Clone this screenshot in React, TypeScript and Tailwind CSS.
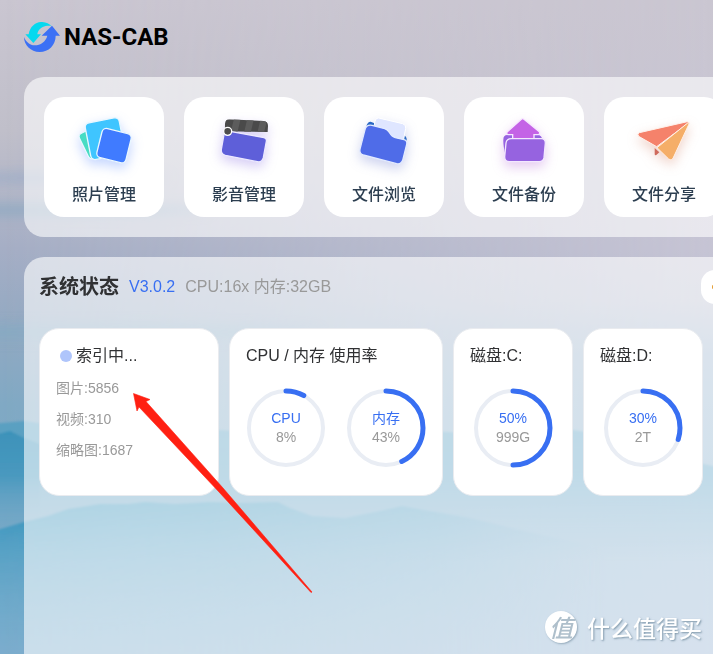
import type { ReactNode } from 'react';

const PhotoIcon = () => (
  <svg viewBox="0 0 240 180" className="h-[60px] w-20 drop-shadow-[0_5px_6px_rgba(64,120,255,0.3)]" aria-hidden="true">
    <g stroke="#e9f7ff" strokeWidth="4">
      <rect x="57" y="61" width="58" height="84" rx="12" fill="#47dcc4" transform="rotate(-26 86 103)" />
      <rect x="71" y="33" width="104" height="112" rx="14" fill="#3fc5ff" transform="rotate(-11 123 89)" />
      <rect x="105" y="65" width="90" height="90" rx="14" fill="#407bff" transform="rotate(14 150 110)" />
    </g>
  </svg>
);

const MovieIcon = () => (
  <svg viewBox="0 0 240 180" className="h-[60px] w-20 drop-shadow-[0_5px_6px_rgba(110,80,220,0.28)]" aria-hidden="true">
    <clipPath id="clapper">
      <path d="M76 31 L178 36 Q192 37 192 50 L191 69 L62 67 L63 44 Q64 31 76 31Z" />
    </clipPath>
    <g clipPath="url(#clapper)">
      <rect x="50" y="20" width="160" height="60" fill="#4a4a4a" />
      <path d="M92 20 L112 20 L98 80 L78 80Z M132 20 L152 20 L138 80 L118 80Z M172 20 L192 20 L178 80 L158 80Z" fill="#5c5c5c" />
    </g>
    <path d="M78 67 L180 86 Q189 88 187 97 L178 146 Q174 161 160 158 L64 139 Q50 135 52 121 L60 76 Q63 65 78 67Z" fill="#5e5fd9" stroke="#ece9ff" strokeWidth="4" />
    <circle cx="71" cy="67" r="12" fill="#4c4c4c" stroke="#fff" strokeWidth="4" />
  </svg>
);

const FolderIcon = () => (
  <svg viewBox="0 0 240 180" className="h-[60px] w-20 drop-shadow-[0_5px_6px_rgba(60,80,190,0.25)]" aria-hidden="true">
    <path d="M67 52 Q70 38 80 38 L176 76 Q190 82 188 96 L170 110Z" fill="#2b69c4" />
    <path d="M104 27 L176 44 Q187 48 185 58 L177 102 L86 76 L93 36 Q96 26 104 27Z" fill="#dfe6ff" stroke="#fff" strokeWidth="3" />
    <path d="M84 49 L122 59 Q130 61 136 70 Q144 83 154 86 L180 92 Q191 95 188 106 L176 154 Q171 167 158 164 L58 138 Q45 134 48 120 L63 62 Q67 46 84 49Z" fill="#4f6ce8" stroke="#e3ebff" strokeWidth="4" />
  </svg>
);

const BackupIcon = () => (
  <svg viewBox="0 0 240 180" className="h-[60px] w-20 drop-shadow-[0_5px_6px_rgba(160,70,200,0.28)]" aria-hidden="true">
    <path d="M70 78 L160 78 Q174 78 174 92 L160 130 L66 145 Q57 110 58 92 Q58 78 70 78Z" fill="#9663e0" />
    <path d="M112 31 Q116 27 120 31 L166 68 Q170 76 162 77 L150 77 L150 96 L86 96 L86 77 L73 77 Q65 76 70 68Z" fill="#c463e6" stroke="#f7e8ff" strokeWidth="4" />
    <path d="M82 89 L172 89 Q184 89 184 102 L180 146 Q178 158 166 158 L76 158 Q62 158 62 144 L66 102 Q68 89 82 89Z" fill="#9663e0" stroke="#f3e8ff" strokeWidth="4" />
  </svg>
);

const ShareIcon = () => (
  <svg viewBox="0 0 240 180" className="h-[60px] w-20 drop-shadow-[0_5px_6px_rgba(200,100,70,0.28)]" aria-hidden="true">
    <path d="M92 117 L106 130 L97 138 Q92 140 92 134Z" fill="#cf6a5c" />
    <path d="M46 71 L190 38 Q196 38 192 43 L98 113 L44 82 Q38 74 46 71Z" fill="#f5826b" stroke="#fff0ea" strokeWidth="3" />
    <path d="M191 42 Q197 38 195 45 L147 148 Q142 157 134 150 L99 116Z" fill="#f5ae68" stroke="#fff0e6" strokeWidth="3" />
  </svg>
);

const Logo = () => (
  <svg viewBox="0 0 108 90" className="h-[30px] w-9" aria-hidden="true">
    <path d="M4 37 L14 37 C18 12 36 -1 55 0 C67 1 76 5 82 12 C69 9 51 13 43 27 Q40 32 40 37 L51 37 L28 63Z" fill="#05d9ef" />
    <path d="M84 11 L108 41 L95 41 C95 69 74 90 47 90 C20 90 0 69 0 45 C6 60 18 70 32 70 C50 70 65 59 70 41 L53 41Z" fill="#3c70f5" />
  </svg>
);

const Landscape = () => (
  <svg viewBox="0 0 713 654" preserveAspectRatio="xMidYMid slice" className="absolute inset-0 h-full w-full" aria-hidden="true">
    <defs>
      <linearGradient id="sky" x1="0" y1="0" x2="0" y2="1">
        <stop offset="0" stopColor="#cac6d1" />
        <stop offset="0.2" stopColor="#c0bfca" />
        <stop offset="0.28" stopColor="#b5b8c8" />
        <stop offset="0.38" stopColor="#a5aec5" />
        <stop offset="0.5" stopColor="#93a9c2" />
        <stop offset="0.62" stopColor="#80a9c4" />
        <stop offset="1" stopColor="#79accb" />
      </linearGradient>
      <linearGradient id="skyRight" x1="0" y1="0" x2="0" y2="1">
        <stop offset="0" stopColor="#cac6d1" />
        <stop offset="0.38" stopColor="#c6c4d4" />
        <stop offset="0.46" stopColor="#bec2d3" />
        <stop offset="0.54" stopColor="#a4bad1" />
        <stop offset="0.75" stopColor="#8cb4d0" />
        <stop offset="1" stopColor="#9ab5d4" />
      </linearGradient>
      <linearGradient id="fade" x1="0" y1="0" x2="1" y2="0">
        <stop offset="0" stopColor="#000" />
        <stop offset="1" stopColor="#fff" />
      </linearGradient>
      <mask id="fadeRight">
        <rect width="713" height="654" fill="url(#fade)" />
      </mask>
      <linearGradient id="fadeOut" x1="0" y1="0" x2="1" y2="0">
        <stop offset="0" stopColor="#fff" />
        <stop offset="0.3" stopColor="#ccc" />
        <stop offset="0.62" stopColor="#777" />
        <stop offset="0.85" stopColor="#000" />
      </linearGradient>
      <mask id="fadeLeft">
        <rect x="-10" width="723" height="654" fill="url(#fadeOut)" />
      </mask>
      <linearGradient id="ridgeFar" x1="0" y1="0" x2="0" y2="1">
        <stop offset="0" stopColor="#4a9cc0" stopOpacity="0.7" />
        <stop offset="0.4" stopColor="#4c9dc2" stopOpacity="0.65" />
        <stop offset="0.85" stopColor="#6aa4c6" stopOpacity="0.25" />
        <stop offset="1" stopColor="#6aa4c6" stopOpacity="0" />
      </linearGradient>
      <linearGradient id="ridgeStrip" x1="0" y1="0" x2="0" y2="1">
        <stop offset="0" stopColor="#2f8cb6" />
        <stop offset="0.5" stopColor="#3590ba" stopOpacity="0.7" />
        <stop offset="1" stopColor="#6aa4c6" stopOpacity="0" />
      </linearGradient>
      <linearGradient id="ridgeNear" x1="0" y1="0" x2="0" y2="1">
        <stop offset="0" stopColor="#3593bb" />
        <stop offset="0.25" stopColor="#4a9ec4" stopOpacity="0.8" />
        <stop offset="0.75" stopColor="#70abcd" stopOpacity="0.5" />
        <stop offset="1" stopColor="#8aafd2" stopOpacity="0.5" />
      </linearGradient>
      <filter id="soft" x="-20%" y="-50%" width="140%" height="200%">
        <feGaussianBlur stdDeviation="6" />
      </filter>
      <filter id="edge">
        <feGaussianBlur stdDeviation="1" />
      </filter>
    </defs>
    <rect width="713" height="654" fill="url(#sky)" />
    <rect width="713" height="654" fill="url(#skyRight)" mask="url(#fadeRight)" />
    <g filter="url(#soft)">
      <ellipse cx="40" cy="178" rx="130" ry="5" fill="#92a9c6" opacity="0.6" />
      <ellipse cx="20" cy="210" rx="190" ry="6" fill="#86a7c1" opacity="0.7" />
      <ellipse cx="60" cy="332" rx="260" ry="8" fill="#7fabc3" opacity="0.5" />
    </g>
    <g filter="url(#edge)">
      <path d="M-10 424 L24 421 L60 426 L110 436 L150 432 L220 430 L290 436 L360 430 L450 432 L500 440 L560 428 L600 434 L650 452 L730 470 L730 560 L-10 560Z" fill="url(#ridgeFar)" />
      <path d="M-10 436 L10 431 L24 438 L40 444 L40 520 L-10 520Z" fill="url(#ridgeStrip)" opacity="0.7" />
      <path d="M-10 532 L24 522 L48 516 L68 509 L100 504 L128 504 L145 502 L175 504 L210 502 L240 503 L278 502 L290 508 L312 516 L345 518 L380 511 L402 506 L430 511 L470 518 L520 530 L600 548 L660 560 L660 670 L-10 670Z" fill="url(#ridgeNear)" mask="url(#fadeLeft)" />
    </g>
  </svg>
);

const apps = [
  { label: '照片管理', icon: <PhotoIcon /> },
  { label: '影音管理', icon: <MovieIcon /> },
  { label: '文件浏览', icon: <FolderIcon /> },
  { label: '文件备份', icon: <BackupIcon /> },
  { label: '文件分享', icon: <ShareIcon /> },
];

function Card({ title, className, children }: { title: ReactNode; className: string; children: ReactNode }) {
  return (
    <section className={`h-[168px] shrink-0 rounded-[20px] border border-[#e9ebef] bg-white px-4 pt-4 ${className}`}>
      <h3 className="flex h-[22px] items-center text-base leading-[22px] text-[#303133]">{title}</h3>
      {children}
    </section>
  );
}

function Ring({ percent, top, bottom }: { percent: number; top: string; bottom: string }) {
  return (
    <div className="grid h-20 w-20 place-items-center">
      <svg viewBox="0 0 80 80" className="col-start-1 row-start-1 h-20 w-20 -rotate-90" aria-hidden="true">
        <circle cx="40" cy="40" r="37" fill="none" stroke="#e9edf4" strokeWidth="4" />
        <circle
          cx="40"
          cy="40"
          r="37"
          fill="none"
          stroke="#386ff2"
          strokeWidth="5"
          strokeLinecap="round"
          pathLength="100"
          strokeDasharray={`${percent} 100`}
        />
      </svg>
      <div className="col-start-1 row-start-1 text-center text-sm leading-[19px]">
        <div className="text-[#386ff2]">{top}</div>
        <div className="text-[#999999]">{bottom}</div>
      </div>
    </div>
  );
}

export default function App() {
  return (
    <div className="relative flex min-h-screen flex-col overflow-hidden font-['Liberation_Sans','Noto_Sans_CJK_SC',sans-serif]">
      <Landscape />

      <header className="relative flex h-[77px] items-center gap-1 pb-[3px] pl-6">
        <Logo />
        <h1 className="font-['Roboto',sans-serif] text-2xl font-bold text-black">NAS-CAB</h1>
      </header>

      <main className="relative -mr-20 flex flex-1 flex-col gap-5 pl-6">
        <nav className="flex gap-5 rounded-[20px] bg-white/60 p-5">
          {apps.map((app) => (
            <button key={app.label} type="button" className="flex h-[120px] w-[120px] shrink-0 flex-col items-center gap-3 rounded-[20px] bg-white pt-3">
              {app.icon}
              <span className="font-['Noto_Sans_CJK_SC',sans-serif] text-base leading-6 font-medium text-[#2c3e50]">{app.label}</span>
            </button>
          ))}
        </nav>

        <section className="flex-1 rounded-t-[20px] bg-white/60 px-[15px] pt-3">
          <div className="flex h-9 items-center gap-[10px]">
            <h2 className="text-xl leading-9 font-bold text-[#303133]">系统状态</h2>
            <span className="text-base text-[#386ff2]">V3.0.2</span>
            <span className="text-base text-[#999999]">CPU:16x 内存:32GB</span>
            <button type="button" aria-label="会员" className="ml-auto flex h-[34px] w-[77px] items-center rounded-[14px] bg-white px-[11px]">
              <svg viewBox="0 0 16 16" className="h-4 w-4" aria-hidden="true">
                <path d="M0 8 L8 1 L16 8 L8 15Z" fill="#e6a23c" stroke="#e6a23c" strokeWidth="2" strokeLinejoin="round" />
              </svg>
            </button>
          </div>

          <div className="mt-[23px] flex gap-[10px]">
            <Card
              className="w-[180px]"
              title={
                <>
                  <span className="mr-1 ml-1 h-3 w-3 rounded-full bg-[#afc5fb]" />
                  索引中...
                </>
              }
            >
              <ul className="mt-[6px] text-sm leading-[31px] text-[#999999]">
                <li>图片:5856</li>
                <li>视频:310</li>
                <li>缩略图:1687</li>
              </ul>
            </Card>
            <Card className="w-[214px]" title="CPU / 内存 使用率">
              <div className="mt-[21px] flex gap-5">
                <Ring percent={8} top="CPU" bottom="8%" />
                <Ring percent={43} top="内存" bottom="43%" />
              </div>
            </Card>
            <Card className="w-[120px]" title="磁盘:C:">
              <div className="mt-[21px] flex justify-center">
                <Ring percent={50} top="50%" bottom="999G" />
              </div>
            </Card>
            <Card className="w-[120px]" title="磁盘:D:">
              <div className="mt-[21px] flex justify-center">
                <Ring percent={30} top="30%" bottom="2T" />
              </div>
            </Card>
          </div>
        </section>
      </main>

      <svg viewBox="0 0 180 200" className="pointer-events-none absolute top-[393px] left-[133px] h-[200px] w-[180px]" aria-hidden="true">
        <path d="M0.500 0.500 L17 6.500 L13 8.500 L90 95 L179 199 L178 199.500 L86 99 L6 14 L4 18Z" fill="#ff2012" stroke="#ff2012" strokeWidth="0.6" />
      </svg>

      <div className="absolute right-[11px] bottom-[9px] flex items-center gap-[10px] font-['Noto_Sans_CJK_SC',sans-serif] font-medium">
        <span className="grid h-8 w-8 place-items-center rounded-full bg-white text-2xl leading-8 text-[#aebfcb] italic shadow-[1px_1px_2px_rgba(90,120,140,0.5)]">值</span>
        <span className="text-[23px] leading-9 text-white [text-shadow:1px_1px_2px_rgba(90,120,140,0.7)]">什么值得买</span>
      </div>
    </div>
  );
}
